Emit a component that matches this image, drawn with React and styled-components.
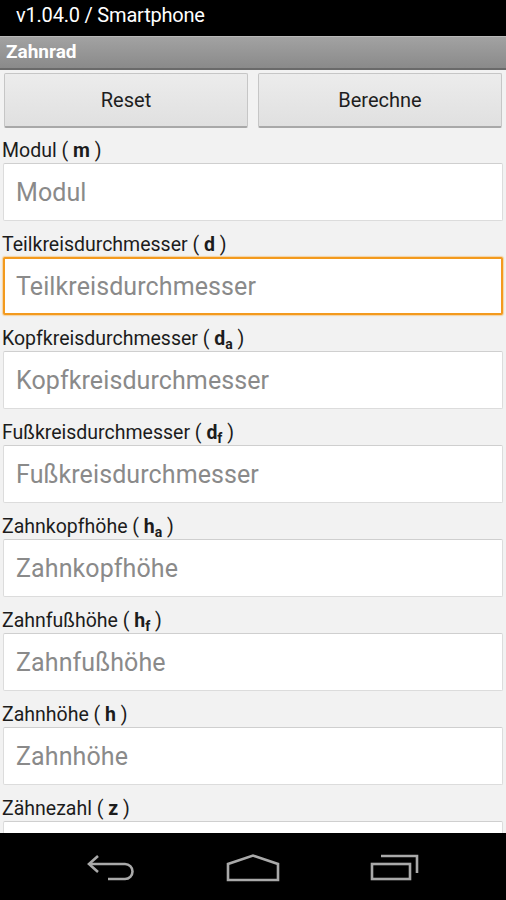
import React from "react";
import styled, { createGlobalStyle } from "styled-components";

const Global = createGlobalStyle`
  html, body { margin: 0; padding: 0; background: #000; }
  body { font-family: Roboto, "Noto Sans", sans-serif; }
  * { box-sizing: border-box; }
`;

const Screen = styled.div`
  width: 506px;
  height: 900px;
  display: flex;
  flex-direction: column;
  background: #f2f2f2;
  overflow: hidden;
`;

const StatusBar = styled.div`
  height: 36px;
  flex: none;
  background: #000;
  color: #fff;
  font-size: 20px;
  line-height: 30px;
  padding-left: 16px;
  letter-spacing: -0.2px;
`;

const TitleBar = styled.div`
  height: 34px;
  flex: none;
  background: linear-gradient(#a2a2a2, #8a8a8a);
  border-top: 1px solid #b8b8b8;
  border-bottom: 2px solid #6a6a6a;
  color: #fff;
  font-weight: bold;
  font-size: 19px;
  line-height: 30px;
  padding-left: 6px;
`;

const Content = styled.div`
  flex: 1;
  overflow: hidden;
  display: flex;
  flex-direction: column;
`;

const ButtonRow = styled.div`
  display: flex;
  gap: 10px;
  padding: 3px 4px 0 4px;
`;

const Button = styled.button`
  flex: 1;
  height: 55px;
  border: 1px solid #c6c6c6;
  border-bottom: 2px solid #a8a8a8;
  border-radius: 2px;
  background: linear-gradient(#ececec, #e0e0e0);
  font-family: Roboto, sans-serif;
  font-size: 20px;
  color: #1e1e1e;
  padding: 0;
`;

const Fields = styled.div`
  display: flex;
  flex-direction: column;
  gap: 13px;
  padding-top: 12px;
`;

const Field = styled.div`
  display: flex;
  flex-direction: column;
  gap: 1px;
`;

const Label = styled.div`
  font-size: 19.5px;
  line-height: 22px;
  color: #1c1c1c;
  padding-left: 2px;
  white-space: nowrap;
`;

const Sym = styled.b`
  font-weight: bold;
`;

const Sub = styled.sub`
  font-weight: bold;
  font-size: 14px;
  line-height: 0;
  vertical-align: -4px;
`;

const Input = styled.div`
  height: 58px;
  margin: 0 3px;
  background: #fff;
  border: ${(p) => (p.$focused ? "2px solid #f39a1e" : "1px solid #dcdcdc")};
  border-top-color: ${(p) => (p.$focused ? "#f39a1e" : "#cfcfcf")};
  border-radius: 2px;
  box-shadow: ${(p) => (p.$focused ? "0 0 1px 1px rgba(250,180,80,0.5)" : "none")};
  display: flex;
  align-items: center;
  padding-left: ${(p) => (p.$focused ? "11px" : "12px")};
  font-size: 25px;
  letter-spacing: 0.1px;
  color: #8a8a8a;
  white-space: nowrap;
  overflow: hidden;
`;

const NavBar = styled.div`
  height: 67px;
  flex: none;
  background: #000;
  display: flex;
  justify-content: center;
  align-items: center;
`;

const NavSlot = styled.div`
  width: 142px;
  display: flex;
  justify-content: center;
  align-items: center;
  padding-top: 2px;
`;

const fields = [
  { label: "Modul", sym: "m", ph: "Modul" },
  { label: "Teilkreisdurchmesser", sym: "d", ph: "Teilkreisdurchmesser", focused: true },
  { label: "Kopfkreisdurchmesser", sym: "d", sub: "a", ph: "Kopfkreisdurchmesser" },
  { label: "Fußkreisdurchmesser", sym: "d", sub: "f", ph: "Fußkreisdurchmesser" },
  { label: "Zahnkopfhöhe", sym: "h", sub: "a", ph: "Zahnkopfhöhe" },
  { label: "Zahnfußhöhe", sym: "h", sub: "f", ph: "Zahnfußhöhe" },
  { label: "Zahnhöhe", sym: "h", ph: "Zahnhöhe" },
  { label: "Zähnezahl", sym: "z", ph: "Zähnezahl" },
];

const BackIcon = () => (
  <svg width="50" height="28" viewBox="0 0 50 28" fill="none" stroke="#a9a9a9" strokeWidth="2.6" strokeLinejoin="miter">
    <path d="M12 2 L3 10 L12 18" />
    <path d="M3 10 H39 A7.5 7.5 0 0 1 39 25 H22" />
  </svg>
);

const HomeIcon = () => (
  <svg width="54" height="28" viewBox="0 0 54 28" fill="none" stroke="#a9a9a9" strokeWidth="2.6">
    <path d="M2 26 V10 L27 1.5 L52 10 V26 Z" />
  </svg>
);

const RecentIcon = () => (
  <svg width="50" height="28" viewBox="0 0 50 28" fill="none" stroke="#a9a9a9" strokeWidth="2.6">
    <rect x="2" y="10" width="38" height="15" />
    <path d="M11 2 H47 V19" />
  </svg>
);

export default function App() {
  return (
    <Screen>
      <Global />
      <StatusBar>v1.04.0 / Smartphone</StatusBar>
      <TitleBar>Zahnrad</TitleBar>
      <Content>
        <ButtonRow>
          <Button>Reset</Button>
          <Button>Berechne</Button>
        </ButtonRow>
        <Fields>
          {fields.map((f) => (
            <Field key={f.label}>
              <Label>
                {f.label} ( <Sym>{f.sym}</Sym>
                {f.sub && <Sub>{f.sub}</Sub>} )
              </Label>
              <Input $focused={f.focused}>{f.ph}</Input>
            </Field>
          ))}
        </Fields>
      </Content>
      <NavBar>
        <NavSlot><BackIcon /></NavSlot>
        <NavSlot><HomeIcon /></NavSlot>
        <NavSlot><RecentIcon /></NavSlot>
      </NavBar>
    </Screen>
  );
}
